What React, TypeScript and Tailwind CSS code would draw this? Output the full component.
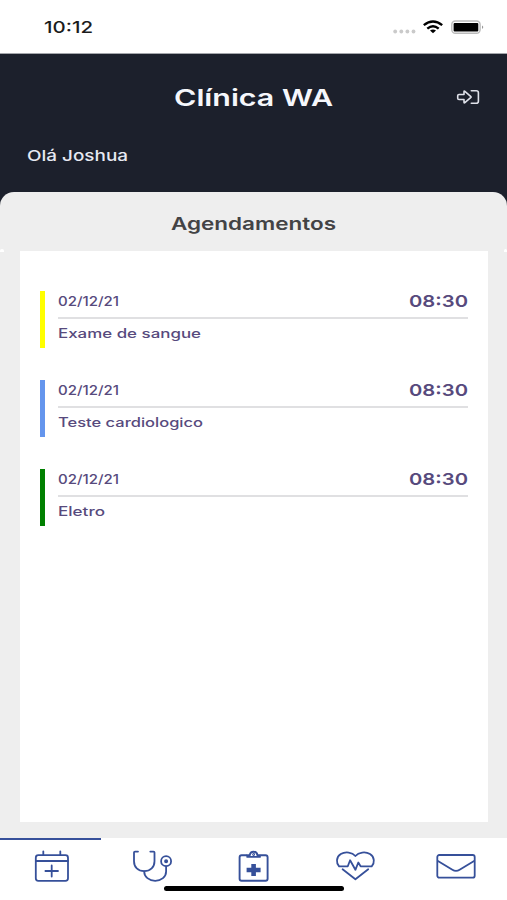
const APPOINTMENTS = [
  { date: '02/12/21', time: '08:30', title: 'Exame de sangue', width: 143, bar: 'bg-[#ffff00]' },
  { date: '02/12/21', time: '08:30', title: 'Teste cardiologico', width: 145, bar: 'bg-[#6495ed]' },
  { date: '02/12/21', time: '08:30', title: 'Eletro', width: 47, bar: 'bg-[#008000]' },
];

const TABS = [
  { name: 'Agenda', icon: CalendarIcon },
  { name: 'Consultas', icon: StethoscopeIcon },
  { name: 'Exames', icon: ClipboardIcon },
  { name: 'Saúde', icon: HeartIcon },
  { name: 'Mensagens', icon: MailIcon },
];

// Extended text: glyphs are stretched to fill the given width
function WideText({ text, width, size, baseline, height, weight = 600 }: {
  text: string;
  width: number;
  size: number;
  baseline: number;
  height: number;
  weight?: number;
}) {
  return (
    <svg width={width} height={height} className="block overflow-visible" fill="currentColor">
      <text x="0" y={baseline} fontSize={size} fontWeight={weight} textLength={width} lengthAdjust="spacingAndGlyphs">
        {text}
      </text>
    </svg>
  );
}

function CalendarIcon() {
  return (
    <svg width="40" height="36" viewBox="0 0 40 36" fill="none" stroke="currentColor" strokeWidth="1.8" strokeLinecap="round">
      <rect x="4.800" y="5.200" width="32.200" height="25.600" rx="2.500" />
      <path d="M5 11h32M12.300 5V1.300M29.300 5V1.300M20.700 15.500v11M14.400 21h12.600" />
    </svg>
  );
}

function StethoscopeIcon() {
  return (
    <svg width="42" height="36" viewBox="0 0 42 36" fill="none" stroke="currentColor" strokeWidth="1.8" strokeLinecap="round" strokeLinejoin="round">
      <path d="M7 1.600H4q-1 0-1 1v8.600c0 5.800 4 9.900 10.200 9.900s10.300-4.100 10.300-9.900V2.600q0-1-1-1h-3.200" />
      <path d="M13.200 21.500c0 5.400 4.800 9.300 11 9.300s10.900-3.900 10.900-9.300v-5" />
      <circle cx="35.100" cy="11.200" r="5" />
      <circle cx="35.100" cy="11.200" r="1.100" fill="currentColor" />
    </svg>
  );
}

function ClipboardIcon() {
  return (
    <svg width="40" height="36" viewBox="0 0 40 36" fill="none" stroke="currentColor" strokeWidth="1.9" strokeLinejoin="round">
      <path d="M14 5.200H8.600q-2 0-2 2v21.600q0 2 2 2h24q2 0 2-2V7.200q0-2-2-2h-5.400" />
      <path d="M14.300 5.200v1.700h12.600V5.200h-2.500c-.4-4.700-7.200-4.700-7.600 0z" />
      <circle cx="20.600" cy="4.500" r=".500" />
      <path d="M20.600 14v12M13.600 20h14" strokeWidth="4.600" />
    </svg>
  );
}

function HeartIcon() {
  return (
    <svg width="42" height="36" viewBox="0 0 42 36" fill="none" stroke="currentColor" strokeWidth="1.8" strokeLinecap="round" strokeLinejoin="round">
      <path d="M21.400 6C18.200 2.300 11.500 1.200 6.800 4.100C2 7.100 2 13 5.100 16.300h8.700l2.300-6 5.300 9.500 2.900-7.300 2.300 3.800h11.100C40.800 13 40.800 7.100 36 4.100C31.300 1.200 24.600 2.300 21.400 6z" />
      <path d="M8.600 19.200L21.400 29.200l12.800-10" />
    </svg>
  );
}

function MailIcon() {
  return (
    <svg width="42" height="36" viewBox="0 0 42 36" fill="none" stroke="currentColor" strokeWidth="1.8" strokeLinejoin="round">
      <rect x="2.300" y="5" width="37.400" height="22.700" rx="2" />
      <path d="M2.500 10.700l14.900 9.100q3.600 2.200 7.200 0l14.900-9.100" />
    </svg>
  );
}

function StatusBar() {
  return (
    <div className="flex h-[54px] items-start justify-between border-b border-[#a4a6ab] bg-white pl-[44px] pr-[22px] text-[#1c1c1c]">
      <div className="pt-[17px]">
        <WideText text="10:12" width={49} height={20} size={16.5} baseline={16.3} weight={500} />
      </div>
      <svg width="92" height="20" viewBox="0 0 92 20" className="mt-[17px]">
        <g fill="#cacaca">
          <circle cx="2.200" cy="14.500" r="1.900" />
          <circle cx="8.300" cy="14.500" r="1.900" />
          <circle cx="14.400" cy="14.500" r="1.900" />
          <circle cx="20.500" cy="14.500" r="1.900" />
        </g>
        <g fill="none" stroke="#000" strokeWidth="2.400">
          <path d="M30.800 8.100Q40 .700 49.200 8.100" />
          <path d="M34.300 11.600q5.700-4.700 11.400 0" />
        </g>
        <path d="M37 13.600q3-2 6 0L40 16.200z" />
        <rect x="58.800" y="4" width="28.300" height="12.300" rx="3.500" fill="#fff" stroke="#bbb" strokeWidth="1.400" />
        <rect x="60.600" y="6" width="24.700" height="8.500" rx="1" />
        <path d="M89 8.500q2.500 1.700 0 3.400z" fill="#999" />
      </svg>
    </div>
  );
}

function Header() {
  return (
    <header className="h-[160px] shrink-0 bg-[#1c202c] text-[#f6f7fc]">
      <div className="grid h-[86px] grid-cols-[1fr_160px_1fr] items-center">
        <div className="col-start-2">
          <WideText text="Clínica WA" width={159} height={30} size={23} baseline={23.5} />
        </div>
        <button className="mr-[27px] justify-self-end text-[#dfe1ea]" aria-label="Sair">
          <svg width="24" height="18" viewBox="0 0 24 18" fill="none" stroke="currentColor" strokeWidth="1.6" strokeLinejoin="round" strokeLinecap="round" className="block">
            <path d="M3 6.500H8V3.700q0-1 .900-.3l6 5.200q.500.400 0 .8l-6 5.200q-.9.700-.9-.3v-2.800H3q-1.300 0-1.300-1.300V7.800q0-1.300 1.300-1.300z" />
            <path d="M15.300 2.700h4.900q2.200 0 2.200 2v8.600q0 2-2.200 2h-4.900" />
          </svg>
        </button>
      </div>
      <div className="pl-[27px] pt-[6px] text-[#e7e9f2]">
        <WideText text="Olá Joshua" width={101} height={20} size={15} baseline={14.8} weight={500} />
      </div>
    </header>
  );
}

export default function App() {
  return (
    <div className="flex h-[900px] w-[507px] flex-col overflow-hidden bg-white font-['Inter','Liberation_Sans',sans-serif]">
      <StatusBar />
      <Header />

      <main className="relative -mt-[22px] flex h-[646px] shrink-0 flex-col rounded-t-[14px] bg-[#eee]">
        <h1 className="flex h-[59px] shrink-0 justify-center pt-[20px] text-[#434345]">
          <WideText text="Agendamentos" width={165} height={24} size={17.5} baseline={18} />
        </h1>
        <div className="mr-[19px] ml-5 h-[571px] bg-white pr-5 pl-5 pt-[40px]">
          {APPOINTMENTS.map((item) => (
            <div key={item.title} className="mb-[32px] flex h-[57px]">
              <div className={`w-[5px] ${item.bar}`} />
              <div className="ml-[13px] flex-1 text-[#574a7d]">
                <div className="flex h-[28px] items-start justify-between border-b-2 border-[#e0e0e2]">
                  <WideText text={item.date} width={61} height={20} size={12.5} baseline={15} weight={500} />
                  <WideText text={item.time} width={59} height={20} size={16.5} baseline={16} />
                </div>
                <WideText text={item.title} width={item.width} height={20} size={12.5} baseline={19} weight={500} />
              </div>
            </div>
          ))}
        </div>
        <div className="absolute top-[57px] left-0 h-[3px] w-[4px] rounded-t-full bg-white" />
        <div className="absolute top-[57px] right-0 h-[3px] w-[3px] rounded-t-full bg-white" />
      </main>

      <nav className="relative grid h-[62px] shrink-0 grid-cols-5 bg-white text-[#36509a]">
        {TABS.map((tab, i) => (
          <div key={tab.name} className={`flex justify-center border-t-2 pt-[10px] ${i === 0 ? 'border-[#36509a]' : 'border-transparent'}`}>
            <tab.icon />
          </div>
        ))}
        <div className="absolute bottom-[9px] left-[164px] h-[5px] w-[180px] rounded-full bg-black" />
      </nav>
    </div>
  );
}
